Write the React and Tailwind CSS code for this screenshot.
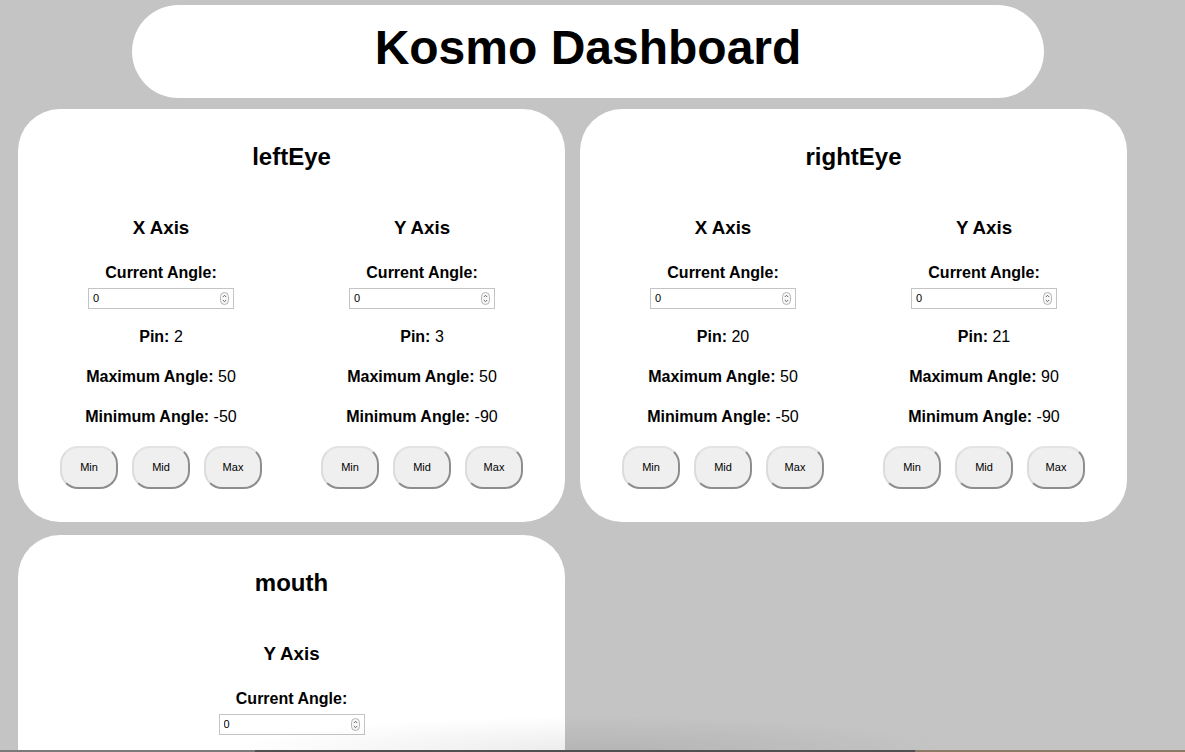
import React from "react";

const servos = [
  {
    name: "leftEye",
    axes: [
      { axis: "X Axis", pin: 2, max: 50, min: -50 },
      { axis: "Y Axis", pin: 3, max: 50, min: -90 },
    ],
  },
  {
    name: "rightEye",
    axes: [
      { axis: "X Axis", pin: 20, max: 50, min: -50 },
      { axis: "Y Axis", pin: 21, max: 90, min: -90 },
    ],
  },
  {
    name: "mouth",
    axes: [{ axis: "Y Axis", pin: 4, max: 30, min: 0 }],
  },
];

const Spinner = () => (
  <svg width="9" height="13" viewBox="0 0 9 13" className="absolute right-[4px] top-[3px]">
    <rect x="0.5" y="0.5" width="8" height="12" rx="4" fill="#f7f7f7" stroke="#b5b5b5" />
    <path d="M2.8 5 L4.5 3.3 L6.2 5" fill="none" stroke="#555" strokeWidth="0.9" />
    <path d="M2.8 8 L4.5 9.7 L6.2 8" fill="none" stroke="#555" strokeWidth="0.9" />
  </svg>
);

const AxisColumn = ({ axis }) => (
  <div className="w-[261px] flex flex-col items-center">
    <h3 className="text-[18.72px] leading-[22px] font-bold">{axis.axis}</h3>
    <p className="mt-[25px] text-base leading-[18px] font-bold">Current Angle:</p>
    <div className="relative mt-[6px] w-[146px] h-[21px] border border-[#c4c4c4] bg-white flex items-center">
      <input
        type="text"
        defaultValue="0"
        className="w-full h-[19px] p-0 pl-[4px] pr-[16px] text-[11px] leading-[19px] text-black outline-none bg-transparent"
      />
      <Spinner />
    </div>
    <p className="mt-[19px] text-base leading-[18px]">
      <span className="font-bold">Pin:</span> {axis.pin}
    </p>
    <p className="mt-[22px] text-base leading-[18px]">
      <span className="font-bold">Maximum Angle:</span> {axis.max}
    </p>
    <p className="mt-[22px] text-base leading-[18px]">
      <span className="font-bold">Minimum Angle:</span> {axis.min}
    </p>
    <div className="mt-[20px] flex gap-[14px]">
      {["Min", "Mid", "Max"].map((label) => (
        <button
          key={label}
          className="w-[58px] h-[43px] rounded-[18px] bg-[#efefef] text-[11px] text-black border-2 border-t-[#e3e3e3] border-l-[#dcdcdc] border-r-[#8d8d8d] border-b-[#8d8d8d]"
        >
          {label}
        </button>
      ))}
    </div>
  </div>
);

const ServoCard = ({ servo }) => (
  <div className="w-[547px] h-[413px] bg-white rounded-[42px] pt-[34px] flex flex-col items-center">
    <h2 className="text-2xl leading-[28px] font-bold">{servo.name}</h2>
    <div className="mt-[46px] flex justify-center w-full">
      {servo.axes.map((axis, i) => (
        <AxisColumn key={i} axis={axis} />
      ))}
    </div>
  </div>
);

export default function App() {
  return (
    <div
      className="min-h-screen bg-[#c4c4c4] text-black pt-[5px] pb-[20px]"
      style={{ fontFamily: '"Liberation Sans", Arial, sans-serif' }}
    >
      <div className="ml-[132px] w-[912px] h-[93px] rounded-[47px] bg-white flex items-center justify-center pb-[7px]">
        <h1 className="text-5xl leading-[56px] font-bold">Kosmo Dashboard</h1>
      </div>

      <div className="mt-[11px] pl-[18px] w-[1160px] flex flex-wrap gap-x-[15px] gap-y-[13px]">
        {servos.map((servo) => (
          <ServoCard key={servo.name} servo={servo} />
        ))}
      </div>

      {/* shadow of an overlapping window at the bottom edge */}
      <div className="fixed left-0 right-0 bottom-0 h-[40px] pointer-events-none">
        <div className="absolute left-[230px] w-[720px] bottom-0 h-[36px] bg-[radial-gradient(ellipse_at_bottom,#00000014,transparent_70%)]" />
        <div className="absolute left-0 w-[255px] bottom-0 h-[2px] bg-[#7a7a7a]" />
        <div className="absolute left-[255px] w-[660px] bottom-0 h-[2px] bg-[#505050]" />
        <div className="absolute left-[915px] right-0 bottom-0 h-[2px] bg-[#8a7a66]" />
      </div>
    </div>
  );
}
